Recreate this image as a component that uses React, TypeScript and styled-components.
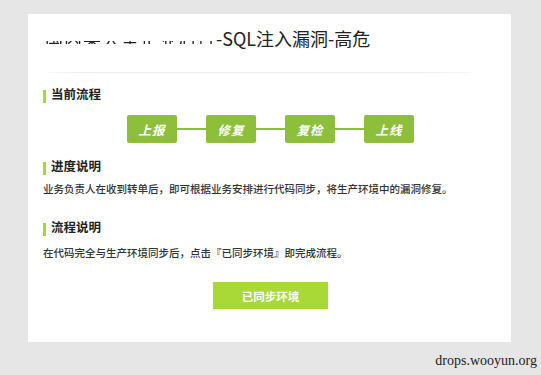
import React from "react";
import styled, { createGlobalStyle } from "styled-components";

const Global = createGlobalStyle`
  html, body { margin: 0; padding: 0; background: #e6e6e6; }
  body { font-family: "Noto Sans CJK SC", "Noto Sans", sans-serif; }
`;

const Page = styled.div`
  width: 541px;
  height: 375px;
  box-sizing: border-box;
  padding: 14px 0 0 28px;
  display: flex;
  flex-direction: column;
  background: #e6e6e6;
  overflow: hidden;
`;

const Card = styled.div`
  width: 483px;
  height: 328px;
  box-sizing: border-box;
  background: #ffffff;
  padding: 11px 0 0 15px;
  display: flex;
  flex-direction: column;
`;

const Title = styled.h1`
  margin: 0 0 0 2px;
  font-size: 18px;
  line-height: 26px;
  font-weight: 400;
  color: #222;
  white-space: nowrap;
`;

const Masked = styled.span`
  letter-spacing: 1px;
  background: linear-gradient(to bottom, transparent 60%, #222 60%, #222 74%, transparent 74%);
  -webkit-background-clip: text;
  background-clip: text;
  color: transparent;
`;

const Divider = styled.div`
  height: 1px;
  margin: 21px 41px 0 4px;
  background: linear-gradient(to right, #f7f7f7, #ececec 15%, #ececec 85%, #f7f7f7);
`;

const Heading = styled.div<{ $top: number }>`
  display: flex;
  align-items: flex-start;
  gap: 5px;
  margin-top: ${(p) => p.$top}px;
  height: 16px;
`;

const Bar = styled.span`
  width: 3px;
  height: 13px;
  margin-top: 3px;
  background: #a5d63b;
`;

const HeadingText = styled.span`
  font-size: 12.5px;
  line-height: 14px;
  font-weight: 700;
  color: #222;
`;

const Flow = styled.div`
  display: flex;
  align-items: center;
  justify-content: center;
  margin: 12px 0 0 -14px;
  width: 483px;
`;

const Step = styled.div`
  width: 50px;
  height: 28px;
  border-radius: 2px;
  background: #8dbf3b;
  color: #fff;
  font-size: 12.5px;
  font-weight: 700;
  font-style: italic;
  display: flex;
  align-items: center;
  justify-content: center;
  letter-spacing: 1px;
`;

const Link = styled.div`
  width: 29px;
  height: 2px;
  background: #8dbf3b;
`;

const Para = styled.p<{ $top: number }>`
  margin: ${(p) => p.$top}px 0 0 0;
  font-size: 10.5px;
  line-height: 16px;
  letter-spacing: 0;
  color: #333;
  font-weight: 500;
  white-space: nowrap;
`;

const ButtonRow = styled.div`
  display: flex;
  justify-content: center;
  margin: 21px 0 0 -15px;
  width: 483px;
`;

const SyncButton = styled.button`
  width: 115px;
  height: 27px;
  border: none;
  border-radius: 0;
  background: #a8d936;
  color: #fff;
  font-family: "Noto Sans CJK SC", sans-serif;
  font-size: 11.5px;
  font-weight: 700;
  padding: 0;
  margin-left: 2px;
`;

const Footer = styled.div`
  display: flex;
  justify-content: flex-end;
  padding: 11px 4px 0 0;
  width: 513px;
  box-sizing: border-box;
`;

const Watermark = styled.span`
  font-family: "Liberation Serif", "Times New Roman", serif;
  font-size: 14px;
  color: #222;
`;

const steps = ["上报", "修复", "复检", "上线"];

export default function App() {
  return (
    <>
      <Global />
      <Page>
        <Card>
          <Title>
            <Masked>国内某大型企业后台</Masked>-SQL注入漏洞-高危
          </Title>
          <Divider />
          <Heading $top={14}>
            <Bar />
            <HeadingText>当前流程</HeadingText>
          </Heading>
          <Flow>
            {steps.map((s, i) => (
              <React.Fragment key={s + i}>
                {i > 0 && <Link />}
                <Step>{s}</Step>
              </React.Fragment>
            ))}
          </Flow>
          <Heading $top={16}>
            <Bar />
            <HeadingText>进度说明</HeadingText>
          </Heading>
          <Para $top={6}>
            业务负责人在收到转单后，即可根据业务安排进行代码同步，将生产环境中的漏洞修复。
          </Para>
          <Heading $top={23}>
            <Bar />
            <HeadingText>流程说明</HeadingText>
          </Heading>
          <Para $top={9}>在代码完全与生产环境同步后，点击『已同步环境』即完成流程。</Para>
          <ButtonRow>
            <SyncButton>已同步环境</SyncButton>
          </ButtonRow>
        </Card>
        <Footer>
          <Watermark>drops.wooyun.org</Watermark>
        </Footer>
      </Page>
    </>
  );
}
